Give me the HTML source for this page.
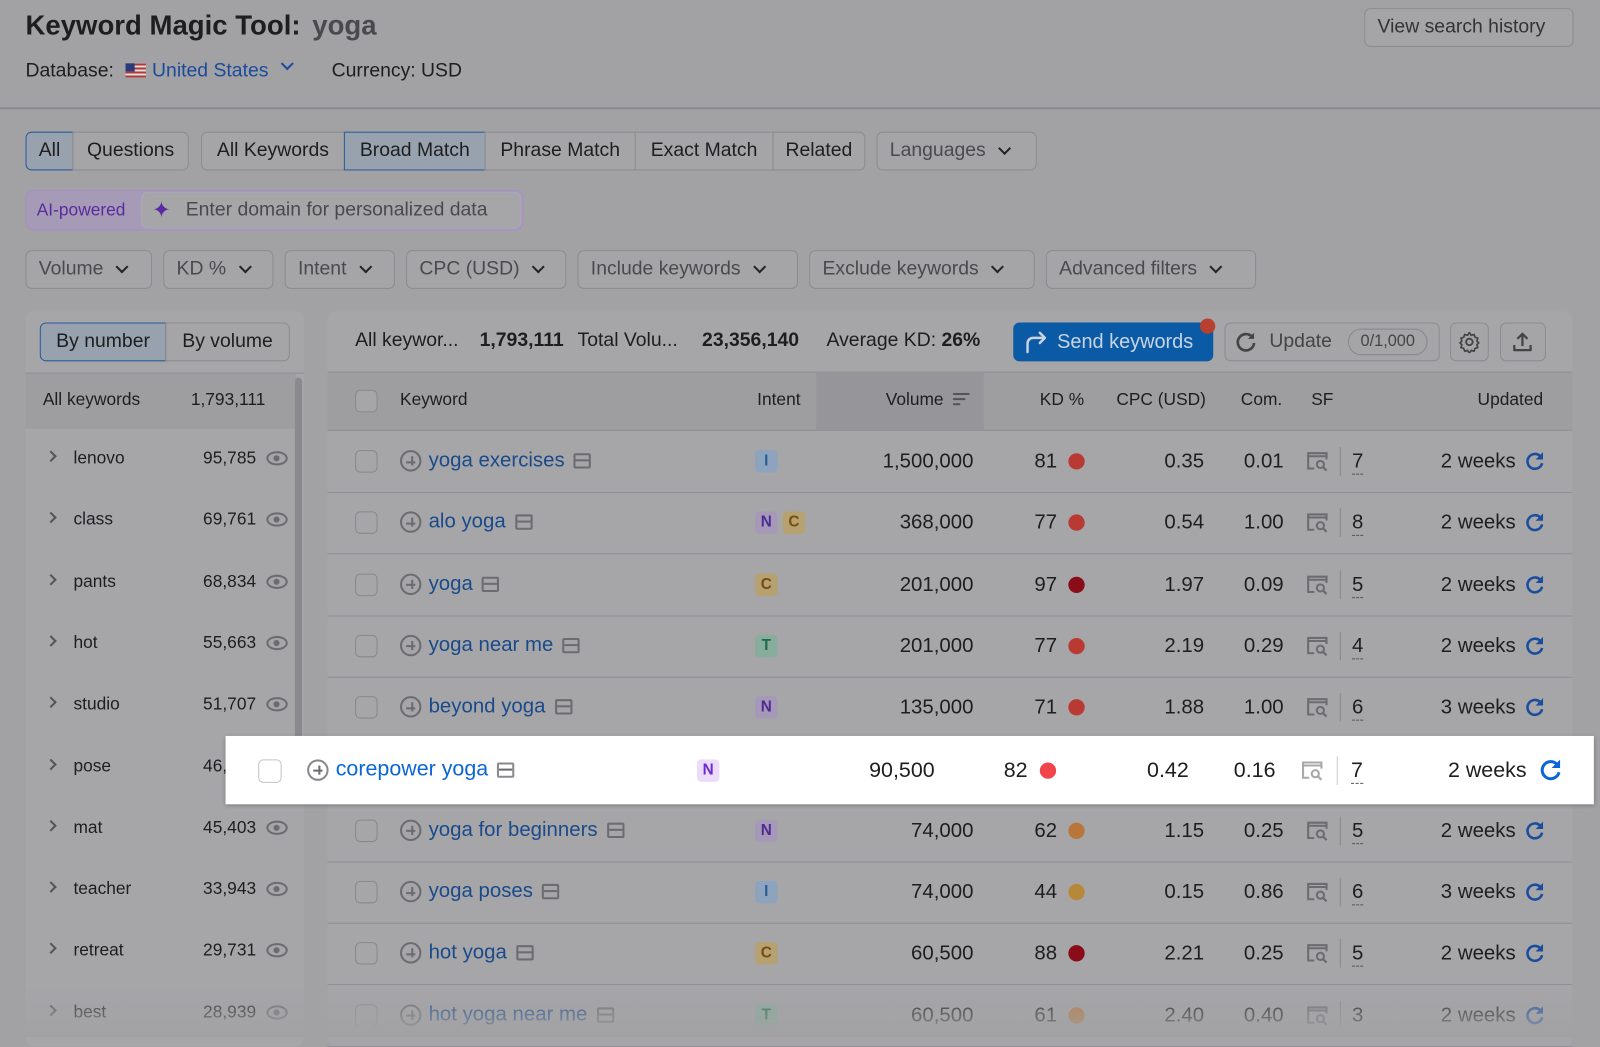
<!DOCTYPE html>
<html><head><meta charset="utf-8"><style>
*{box-sizing:border-box;margin:0;padding:0}
html,body{width:1600px;height:1037px;overflow:hidden;background:#a2a2a5}
body{font-family:"Liberation Sans",sans-serif;color:#1e1e21}
#s{position:absolute;left:0;top:0;width:1568px;height:1016px;transform:scale(1.0204,1.0207);transform-origin:0 0;background:#a2a2a5}
.a{position:absolute;white-space:nowrap}
.btn{position:absolute;border:1px solid #8c8c90;border-radius:6px;height:38px;font-size:19px;display:flex;align-items:center;color:#1e1e21;background:#a5a5a8}
.sel{background:#97a2ae;border-color:#2a5b9a}
.dd{color:#4a4a4e}
.chev{display:inline-block;width:9px;height:9px;border-right:2px solid #222;border-bottom:2px solid #222;transform:rotate(45deg);margin:-5px 4px 0 14px}
.panel{position:absolute;background:#a6a6a9;border-radius:8px}
.cb{position:absolute;width:22px;height:22px;border:1.5px solid #88888c;border-radius:5px;background:#a6a6a9}
.kw{position:absolute;font-size:20px;color:#1a4a8a;display:flex;align-items:center}
.plus{width:21px;height:21px;border:2px solid #6c6c70;border-radius:50%;position:relative;margin-right:7px}
.plus:before{content:"";position:absolute;left:4px;top:8.5px;width:9px;height:2px;background:#6c6c70}
.plus:after{content:"";position:absolute;left:8.5px;top:4px;width:2px;height:9px;background:#6c6c70}
.ser{width:17px;height:15px;border:2px solid #6c6c70;border-radius:2px;margin-left:9px;position:relative}
.ser:after{content:"";position:absolute;left:0;right:0;top:4px;height:2px;background:#6c6c70}
.bd{position:absolute;width:22px;height:22px;border-radius:4px;font-size:15px;font-weight:bold;text-align:center;line-height:22px}
.I{background:#8ea3bd;color:#2a5b9a}.N{background:#a699b8;color:#4e2a94}.C{background:#b5a270;color:#7a4a10}.T{background:#88ad9c;color:#1d6b4a}
.num{position:absolute;font-size:20px;text-align:right}
.dot{position:absolute;width:16px;height:16px;border-radius:50%}
.sep{position:absolute;width:1px;height:28px;background:#88888c}
.sfn{position:absolute;font-size:20px;border-bottom:1px dashed #555}
.hl{position:absolute;height:1px;background:#8e8e94;left:321px;width:1220px}
.side{position:absolute;font-size:17px}
.eye{position:absolute;width:21px;height:14px;border:2px solid #6c6c70;border-radius:50%}
.eye:after{content:"";position:absolute;left:5px;top:2px;width:6px;height:6px;border-radius:50%;background:#6c6c70}
.sch{position:absolute;width:8px;height:8px;border-right:2px solid #555;border-top:2px solid #555;transform:rotate(45deg)}
svg.i{position:absolute}
</style></head><body><div id="s">
<div class="a" style="left:25px;top:10px;font-size:27px;font-weight:bold">Keyword Magic Tool:</div>
<div class="a" style="left:306px;top:10px;font-size:27px;color:#4a4a4e;font-weight:bold">yoga</div>
<div class="a" style="left:25px;top:59px;font-size:19px">Database:</div>
<div class="a" style="left:123px;top:62px;width:20px;height:14px;background:repeating-linear-gradient(#b03a3a 0 2px,#ddd 2px 4px)"><div style="width:9px;height:8px;background:#2a3a7a"></div></div>
<div class="a" style="left:149px;top:59px;font-size:19px;color:#1a4a9c">United States</div>
<div class="chev a" style="left:263px;top:63px;border-color:#1a4a9c"></div>
<div class="a" style="left:325px;top:59px;font-size:19px">Currency: USD</div>
<div class="btn" style="left:1337px;top:8px;width:205px;padding-left:12px;color:#333">View search history</div>
<div class="a" style="left:0;top:105px;width:1568px;height:2px;background:#8a8a8e"></div>

<div class="btn sel" style="left:25px;top:129px;width:47px;border-radius:6px 0 0 6px;justify-content:center">All</div>
<div class="btn" style="left:71px;top:129px;width:114px;border-radius:0 6px 6px 0;justify-content:center">Questions</div>
<div class="btn" style="left:197px;top:129px;width:141px;border-radius:6px 0 0 6px;justify-content:center">All Keywords</div>
<div class="btn sel" style="left:337px;top:129px;width:139px;border-radius:0;justify-content:center">Broad Match</div>
<div class="btn" style="left:475px;top:129px;width:148px;border-radius:0;justify-content:center">Phrase Match</div>
<div class="btn" style="left:622px;top:129px;width:136px;border-radius:0;justify-content:center">Exact Match</div>
<div class="btn" style="left:757px;top:129px;width:91px;border-radius:0 6px 6px 0;justify-content:center">Related</div>
<div class="btn dd" style="left:859px;top:129px;width:157px;padding-left:12px">Languages<span class="chev"></span></div>

<div class="a" style="left:25px;top:186px;width:488px;height:40px;border-radius:8px;background:#a69bb6;border:1px solid #a58fc4"></div>
<div class="a" style="left:36px;top:196px;font-size:17px;color:#5a2aa0">AI-powered</div>
<div class="a" style="left:138px;top:188px;width:373px;height:36px;border-radius:7px;background:#a6a6a9;border:1px solid #b0a4c0"></div>
<div class="a" style="left:149px;top:193px;font-size:22px;color:#5a2aa0">✦</div>
<div class="a" style="left:182px;top:195px;font-size:19px;color:#4a4a4e">Enter domain for personalized data</div>

<div class="btn dd" style="left:25px;top:245px;width:124px;padding-left:12px">Volume<span class="chev"></span></div>
<div class="btn dd" style="left:160px;top:245px;width:108px;padding-left:12px">KD %<span class="chev"></span></div>
<div class="btn dd" style="left:279px;top:245px;width:108px;padding-left:12px">Intent<span class="chev"></span></div>
<div class="btn dd" style="left:398px;top:245px;width:157px;padding-left:12px">CPC (USD)<span class="chev"></span></div>
<div class="btn dd" style="left:566px;top:245px;width:216px;padding-left:12px">Include keywords<span class="chev"></span></div>
<div class="btn dd" style="left:793px;top:245px;width:221px;padding-left:12px">Exclude keywords<span class="chev"></span></div>
<div class="btn dd" style="left:1025px;top:245px;width:206px;padding-left:12px">Advanced filters<span class="chev"></span></div>

<div class="panel" style="left:25px;top:305px;width:273px;height:720px"></div>
<div class="btn sel" style="left:39px;top:316px;width:124px;border-radius:6px 0 0 6px;justify-content:center">By number</div>
<div class="btn" style="left:162px;top:316px;width:122px;border-radius:0 6px 6px 0;justify-content:center">By volume</div>
<div class="a" style="left:25px;top:365px;width:273px;height:1px;background:#909094"></div>
<div class="a" style="left:25px;top:366px;width:265px;height:54px;background:#9e9ea1"></div>
<div class="side" style="left:42px;top:382px">All keywords</div>
<div class="side" style="left:187px;top:382px">1,793,111</div>
<div class="a" style="left:289px;top:370px;width:7px;height:360px;border-radius:4px;background:#8a8a8e"></div>
<div id="sb"></div>

<div class="panel" style="left:321px;top:305px;width:1220px;height:720px"></div>
<div class="a" style="left:348px;top:323px;font-size:19px">All keywor...</div>
<div class="a" style="left:470px;top:323px;font-size:19px;font-weight:bold">1,793,111</div>
<div class="a" style="left:566px;top:323px;font-size:19px">Total Volu...</div>
<div class="a" style="left:688px;top:323px;font-size:19px;font-weight:bold">23,356,140</div>
<div class="a" style="left:810px;top:323px;font-size:19px">Average KD: <b>26%</b></div>
<div class="a" style="left:993px;top:316px;width:196px;height:38px;border-radius:6px;background:#0b5aa6;color:#c9d4e2;font-size:19.5px;line-height:38px;padding-left:43px">Send keywords</div>
<svg class="i" style="left:1003px;top:323px" width="26" height="24" viewBox="0 0 26 24"><path d="M4 22 V14 Q4 8 10 8 H21 M16 3 L21 8 L16 13" fill="none" stroke="#c9d4e2" stroke-width="2.4" stroke-linecap="round" stroke-linejoin="round"/></svg>
<div class="a" style="left:1176px;top:312px;width:15px;height:15px;border-radius:50%;background:#b8402e"></div>
<div class="btn" style="left:1200px;top:316px;width:211px;padding-left:43px;color:#444">Update</div>
<svg class="i" style="left:1210px;top:324px" width="22" height="22" viewBox="0 0 22 22"><path d="M17 6 A8 8 0 1 0 19 12" fill="none" stroke="#444" stroke-width="2.6"/><path d="M19 2 V8 H13" fill="#444"/></svg>
<div class="a" style="left:1321px;top:322px;width:78px;height:26px;border:1px solid #88888c;border-radius:13px;font-size:16px;text-align:center;line-height:24px;color:#444">0/1,000</div>
<div class="btn" style="left:1421px;top:316px;width:38px"></div>
<svg class="i" style="left:1429px;top:324px" width="22" height="22" viewBox="0 0 24 24"><circle cx="12" cy="12" r="3.5" fill="none" stroke="#444" stroke-width="2"/><path d="M12 2l2 3 3-1 1 3 3 1-1 3 2 2-2 2 1 3-3 1-1 3-3-1-2 3-2-3-3 1-1-3-3-1 1-3-2-2 2-2-1-3 3-1 1-3 3 1z" fill="none" stroke="#444" stroke-width="1.8" stroke-linejoin="round"/></svg>
<div class="btn" style="left:1470px;top:316px;width:45px"></div>
<svg class="i" style="left:1481px;top:324px" width="22" height="22" viewBox="0 0 22 22"><path d="M11 15 V3 M6 8 L11 3 L16 8 M3 14 V19 H19 V14" fill="none" stroke="#444" stroke-width="2.2" stroke-linejoin="round"/></svg>
<div class="a" style="left:321px;top:364px;width:1220px;height:58px;background:#9e9ea1;border-top:1px solid #909094;border-bottom:1px solid #909094"></div>
<div class="a" style="left:800px;top:365px;width:164px;height:56px;background:#96969a"></div>
<div class="cb" style="left:348px;top:382px"></div>
<div class="a" style="left:392px;top:382px;font-size:17px">Keyword</div>
<div class="a" style="left:742px;top:382px;font-size:17px">Intent</div>
<div class="a" style="left:868px;top:382px;font-size:17px">Volume</div>
<div class="a" style="left:934px;top:385px;width:16px;height:2px;background:#555"></div>
<div class="a" style="left:934px;top:390px;width:12px;height:2px;background:#555"></div>
<div class="a" style="left:934px;top:395px;width:7px;height:2px;background:#555"></div>
<div class="a" style="left:1019px;top:382px;font-size:17px">KD %</div>
<div class="a" style="left:1094px;top:382px;font-size:17px">CPC (USD)</div>
<div class="a" style="left:1216px;top:382px;font-size:17px">Com.</div>
<div class="a" style="left:1285px;top:382px;font-size:17px">SF</div>
<div class="a" style="left:1448px;top:382px;font-size:17px">Updated</div>
<div id="rows"></div>

<div class="a" style="left:0;top:960px;width:1568px;height:46px;background:linear-gradient(rgba(162,162,165,0),rgba(162,162,165,.75))"></div>
<div class="a" style="left:0;top:1005px;width:1568px;height:11px;background:#a2a2a5"></div>

<div class="a" style="left:221px;top:721px;width:1341px;height:67px;background:#fff;box-shadow:0 1px 4px rgba(0,0,0,.3)"></div>
<div class="a" style="left:253px;top:744px;width:23px;height:23px;border:1.5px solid #c4c4c8;border-radius:5px"></div>
<div class="kw" style="left:301px;top:742px;color:#0a66d8;font-size:21px"><span class="plus" style="border-color:#8a8a8e"></span>corepower yoga<span class="ser" style="border-color:#8a8a8e"></span></div>
<div class="bd" style="left:683px;top:744px;background:#ecdcfa;color:#6a2ad0">N</div>
<div class="num" style="left:816px;top:743px;width:100px;font-size:21px">90,500</div>
<div class="num" style="left:960px;top:743px;width:47px;font-size:21px">82</div>
<div class="dot" style="left:1019px;top:747px;background:#f0454a"></div>
<div class="num" style="left:1095px;top:743px;width:70px;font-size:21px">0.42</div>
<div class="num" style="left:1190px;top:743px;width:60px;font-size:21px">0.16</div>
<div id="hsf"></div>
<div class="sep" style="left:1310px;top:741px;background:#ccc"></div>
<div class="sfn" style="left:1324px;top:743px;font-size:21px">7</div>
<div class="a" style="left:1419px;top:743px;font-size:21px">2 weeks</div>
<div id="href"></div>
</div>
<script>
function sf(x,y,c){return '<svg class="i" style="left:'+x+'px;top:'+y+'px" width="22" height="20" viewBox="0 0 22 20"><path d="M8 17 H2 V2 H20 V8" fill="none" stroke="'+c+'" stroke-width="2"/><path d="M2 5 H20" stroke="'+c+'" stroke-width="2"/><circle cx="14" cy="13" r="3.5" fill="none" stroke="'+c+'" stroke-width="2"/><path d="M16.5 15.5 L20 19" stroke="'+c+'" stroke-width="2.2"/></svg>';}
function rf(x,y,c,s){s=s||20;return '<svg class="i" style="left:'+x+'px;top:'+y+'px" width="'+s+'" height="'+s+'" viewBox="0 0 22 22"><path d="M17 5.5 A8 8 0 1 0 19 13" fill="none" stroke="'+c+'" stroke-width="2.8"/><path d="M20 1 V9 H12 Z" fill="'+c+'"/></svg>';}
document.getElementById("hsf").outerHTML=sf(1275,745,"#a8a8ac");
document.getElementById("href").outerHTML=rf(1508,743,"#0a66d8",23);
var side=[["lenovo","95,785"],["class","69,761"],["pants","68,834"],["hot","55,663"],["studio","51,707"],["pose","46,380"],["mat","45,403"],["teacher","33,943"],["retreat","29,731"],["best","28,939"]];
var h="";side.forEach(function(r,i){var y=449+i*60.3;
h+='<div class="sch" style="left:46px;top:'+(y-6)+'px"></div><div class="side" style="left:72px;top:'+(y-10)+'px">'+r[0]+'</div><div class="side" style="left:150px;width:101px;text-align:right;top:'+(y-10)+'px">'+r[1]+'</div><div class="eye" style="left:261px;top:'+(y-7)+'px"></div>';});
document.getElementById("sb").outerHTML=h;
var rows=[["yoga exercises",["I"],"1,500,000","81","#b83a32","0.35","0.01","7","2"],["alo yoga",["N","C"],"368,000","77","#b83a32","0.54","1.00","8","2"],["yoga",["C"],"201,000","97","#8a0c18","1.97","0.09","5","2"],["yoga near me",["T"],"201,000","77","#b83a32","2.19","0.29","4","2"],["beyond yoga",["N"],"135,000","71","#b83a32","1.88","1.00","6","3"],null,["yoga for beginners",["N"],"74,000","62","#b8763a","1.15","0.25","5","2"],["yoga poses",["I"],"74,000","44","#b8883a","0.15","0.86","6","3"],["hot yoga",["C"],"60,500","88","#8a0c18","2.21","0.25","5","2"],["hot yoga near me",["T"],"60,500","61","#b8763a","2.40","0.40","3","2"]];
h="";rows.forEach(function(r,i){var y=452+i*60.3;h+='<div class="hl" style="top:'+(y+30)+'px"></div>';if(!r)return;
h+='<div class="cb" style="left:348px;top:'+(y-11)+'px"></div>';
h+='<div class="kw" style="left:392px;top:'+(y-12)+'px"><span class="plus"></span>'+r[0]+'<span class="ser"></span></div>';
r[1].forEach(function(b,j){h+='<div class="bd '+b+'" style="left:'+(740+j*27)+'px;top:'+(y-11)+'px">'+b+'</div>';});
h+='<div class="num" style="left:834px;width:120px;top:'+(y-11)+'px">'+r[2]+'</div>';
h+='<div class="num" style="left:990px;width:46px;top:'+(y-11)+'px">'+r[3]+'</div>';
h+='<div class="dot" style="left:1047px;top:'+(y-8)+'px;background:'+r[4]+'"></div>';
h+='<div class="num" style="left:1110px;width:70px;top:'+(y-11)+'px">'+r[5]+'</div>';
h+='<div class="num" style="left:1198px;width:60px;top:'+(y-11)+'px">'+r[6]+'</div>';
h+=sf(1280,y-10,"#6c6c70")+'<div class="sep" style="left:1313px;top:'+(y-14)+'px"></div>';
h+='<div class="sfn" style="left:1325px;top:'+(y-11)+'px">'+r[7]+'</div>';
h+='<div class="a" style="left:1412px;top:'+(y-11)+'px;font-size:20px">'+r[8]+' weeks</div>';
h+=rf(1494,y-10,"#1a4e9c");});
document.getElementById("rows").outerHTML=h;
</script>
</body></html>
